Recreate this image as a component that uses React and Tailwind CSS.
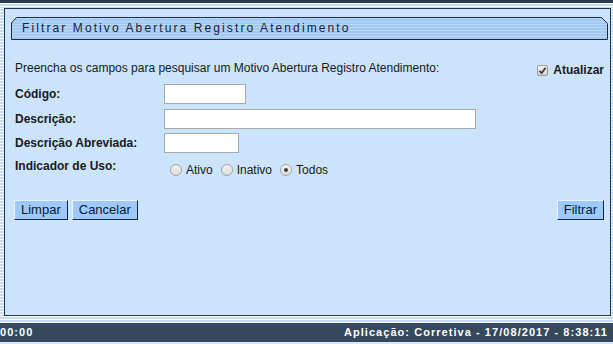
import React from 'react'

const stripes =
  'bg-[repeating-linear-gradient(to_bottom,#ffffff_0px,#ffffff_1px,#c4dcf4_1px,#c4dcf4_3px)]'

function TitleBar({ text }) {
  return (
    <div className="relative ml-[6px] mt-[8px] h-[23px] w-[597px]">
      <svg className="absolute inset-0" width="597" height="23" viewBox="0 0 597 23">
        <defs>
          <pattern id="tb" width="4" height="3" patternUnits="userSpaceOnUse">
            <rect width="4" height="3" fill="#a3c9f2" />
            <rect y="1" width="4" height="1" fill="#bad8f8" />
          </pattern>
        </defs>
        <polygon
          points="0.5,22.5 0.5,6 5.5,0.5 590.5,0.5 596.5,6.5 596.5,22.5"
          fill="url(#tb)"
          stroke="#1b2c44"
          strokeWidth="1"
        />
      </svg>
      <span className="relative block pl-[11px] pt-[3px] text-[12px] leading-[16px] tracking-[2.1px] text-[#14243a]">
        {text}
      </span>
    </div>
  )
}

function Radio({ label, checked }) {
  return (
    <label className="flex items-center">
      <span className="flex h-[12px] w-[12px] items-center justify-center rounded-full border border-[#a4a4a4] bg-gradient-to-b from-[#f4f4f4] to-[#dcdcdc]">
        {checked && <span className="h-[4px] w-[4px] rounded-full bg-[#404040]" />}
      </span>
      <span className="ml-[4px] mr-[8px]">{label}</span>
    </label>
  )
}

function Button({ children }) {
  return (
    <button className="h-[20px] border border-t-[#eaf4ff] border-l-[#eaf4ff] border-r-[#15263d] border-b-[#15263d] bg-[#9dcafa] px-[6px] text-[13px] leading-[18px] text-[#0b1a2e]">
      {children}
    </button>
  )
}

const rows = [
  { label: 'Código:', width: 'w-[82px]', mt: 'mt-[6px]' },
  { label: 'Descrição:', width: 'w-[312px]', mt: 'mt-[5px]' },
  { label: 'Descrição Abreviada:', width: 'w-[75px]', mt: 'mt-[4px]' },
]

export default function App() {
  return (
    <div className="flex h-[344px] w-[613px] flex-col overflow-hidden bg-[#cbe3fb] font-['Liberation_Sans',Arial,sans-serif] text-[12px] text-[#1a1a1a]">
      <div className="h-[3px] bg-[#273a4f]" />
      <div className={`h-[5px] ${stripes}`} />

      <div className="flex h-[308px]">
        <div className={`w-[4px] ${stripes}`} />
        <div className="flex w-[607px] flex-col border border-[#22354e] bg-[#cbe3fb]">
          <TitleBar text="Filtrar Motivo Abertura Registro Atendimento" />

          <div className="pl-[10px] pr-[6px]">
            <div className="mt-[18px] flex h-[20px] items-center justify-between">
              <span>Preencha os campos para pesquisar um Motivo Abertura Registro Atendimento:</span>
              <label className="mt-[4px] flex items-center font-bold">
                <span className="flex h-[11px] w-[11px] items-center justify-center rounded-[2px] border border-[#9a9a9a] bg-gradient-to-b from-[#f2f2f2] to-[#d6d6d6]">
                  <svg width="9" height="9" viewBox="0 0 9 9">
                    <path d="M1.5 4.8 L3.6 7 L7.6 1.8" fill="none" stroke="#3c3c3c" strokeWidth="1.8" />
                  </svg>
                </span>
                <span className="ml-[5px] text-[12px]">Atualizar</span>
              </label>
            </div>

            {rows.map((r) => (
              <div key={r.label} className={`flex h-[20px] items-center ${r.mt}`}>
                <span className="w-[149px] font-bold">{r.label}</span>
                <div className={`h-[20px] border border-[#a9a9a9] bg-white ${r.width}`} />
              </div>
            ))}

            <div className="mt-[3px] flex h-[20px] items-center">
              <span className="w-[155px] font-bold">Indicador de Uso:</span>
              <div className="mt-[8px] flex items-center">
                <Radio label="Ativo" />
                <Radio label="Inativo" />
                <Radio label="Todos" checked />
              </div>
            </div>

            <div className="mt-[24px] flex items-center">
              <div className="ml-[-1px] flex gap-[4px]">
                <Button>Limpar</Button>
                <Button>Cancelar</Button>
              </div>
              <div className="ml-auto">
                <Button>Filtrar</Button>
              </div>
            </div>
          </div>
        </div>
        <div className={`w-[2px] ${stripes}`} />
      </div>

      <div className={`h-[7px] ${stripes}`} />
      <div className="flex h-[19px] items-center justify-between bg-[#34485e] pr-[5px] text-[11px] font-bold tracking-[1.05px] text-white">
        <span>00:00</span>
        <span>Aplicação: Corretiva - 17/08/2017 - 8:38:11</span>
      </div>
      <div className="flex-1 bg-[#d5e7f8]" />
    </div>
  )
}
